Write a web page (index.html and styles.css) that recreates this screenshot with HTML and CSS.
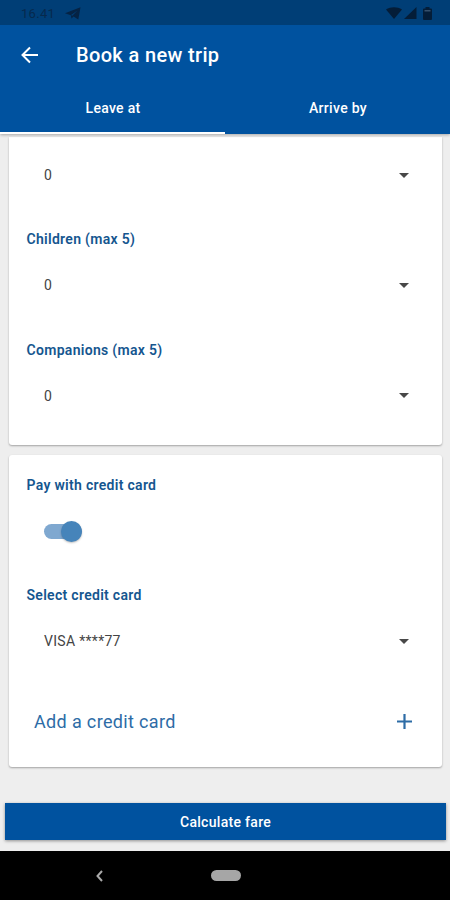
FILE: index.html
```
<!DOCTYPE html>
<html lang="en">
<head>
    <meta charset="UTF-8">
    <meta name="viewport" content="width=device-width, initial-scale=1.0">
    <title>Book a new trip</title>
    <link rel="stylesheet" href="styles.css">
</head>
<body>
    <header class="header">
        <div class="status-bar">
            <span class="clock">16.41</span>
            <svg class="telegram" width="16" height="13" viewBox="0 0 16 13"><path d="M0 6.2 15.5.3 13.3 12.4 8.6 9.4 6.5 11.6 5.8 8.2Z"/><path class="fold" d="M6 8 12.5 3.5 7.3 8.7"/></svg>
            <div class="status-icons">
                <svg width="16" height="12" viewBox="0 0 16 12"><path d="M0 2.5C4.5-.6 11.5-.6 16 2.5L8 12Z"/></svg>
                <svg width="13" height="12" viewBox="0 0 13 12"><path d="M0 12 12.5 0V12Z"/></svg>
                <svg class="battery" width="9" height="13" viewBox="0 0 9 13"><path d="M2.5 0h4v1.5H8q1 0 1 1V12q0 1-1 1H1q-1 0-1-1V2.5q0-1 1-1h1.5Z"/><path class="level" d="M1.5 3h6v1.5h-6Z"/></svg>
            </div>
        </div>
        <div class="app-bar">
            <svg class="back" width="18" height="18" viewBox="0 0 18 18"><path d="M17 9H2M9 1.5 1.5 9 9 16.5"/></svg>
            <h1>Book a new trip</h1>
        </div>
        <nav class="tabs">
            <div class="tab active">Leave at</div>
            <div class="tab">Arrive by</div>
        </nav>
    </header>

    <main>
        <section class="card passengers">
            <div class="select"><span>0</span><i class="caret"></i></div>
            <h2>Children (max 5)</h2>
            <div class="select"><span>0</span><i class="caret"></i></div>
            <h2>Companions (max 5)</h2>
            <div class="select"><span>0</span><i class="caret"></i></div>
        </section>

        <section class="card payment">
            <h2>Pay with credit card</h2>
            <div class="switch-row"><div class="switch"><div class="thumb"></div></div></div>
            <h2>Select credit card</h2>
            <div class="select"><span>VISA ****77</span><i class="caret"></i></div>
            <div class="add-card">
                <span>Add a credit card</span>
                <svg width="15" height="15" viewBox="0 0 15 15"><path d="M7.5 0V15M0 7.5H15"/></svg>
            </div>
        </section>

        <button class="calculate">Calculate fare</button>
    </main>

    <footer class="nav-bar">
        <svg class="nav-back" width="7" height="12" viewBox="0 0 7 12"><path d="M6 1 1.5 6 6 11"/></svg>
        <div class="home"></div>
    </footer>
</body>
</html>
```
FILE: styles.css
```
* { box-sizing: border-box; }
body {
    margin: 0;
    height: 900px;
    display: flex;
    flex-direction: column;
    background: #eee;
    font-family: Roboto, sans-serif;
    overflow: hidden;
}
h1, h2 { margin: 0; }
svg { display: block; }

/* header */
.header {
    position: relative;
    height: 134px;
    background: #00529f;
    color: #fff;
    box-shadow: 0 1px 3px rgba(0, 0, 0, 0.3);
}
.status-bar {
    height: 25px;
    padding: 1px 18px 0 21px;
    display: flex;
    align-items: center;
    background: #003e76;
    color: #06294d;
    fill: #052344;
}
.clock {
    width: 44px;
    font-size: 13px;
    letter-spacing: 0.3px;
}
.fold { fill: #003e76; }
.status-icons {
    margin-left: auto;
    display: flex;
    align-items: center;
    gap: 2px;
    fill: #041d38;
}
.battery { margin-left: 4px; }
.level { fill: #35506c; }
.app-bar {
    height: 60px;
    padding-left: 21px;
    display: flex;
    align-items: center;
}
.back {
    margin-right: 37px;
    fill: none;
    stroke: #fff;
    stroke-width: 2;
}
h1 {
    font-size: 20px;
    font-weight: 500;
    letter-spacing: 0.35px;
}
.tabs {
    height: 49px;
    display: flex;
}
.tab {
    flex: 1;
    padding: 0 0 1px 1px;
    display: flex;
    align-items: center;
    justify-content: center;
    font-size: 14px;
    font-weight: 500;
    letter-spacing: 0.3px;
    border-bottom: 2px solid transparent;
}
.tab.active { border-color: #fff; }

/* cards */
main {
    height: 717px;
    display: flex;
    flex-direction: column;
}
.card {
    margin: 0 8px 0 9px;
    background: #fff;
    border-radius: 3px;
    box-shadow: 0 1px 2px rgba(0, 0, 0, 0.32);
}
.passengers {
    height: 308px;
    margin-top: 3px;
    padding-top: 15px;
    border-radius: 0 0 3px 3px;
}
.payment {
    height: 312px;
    margin-top: 10px;
    padding-top: 17px;
}
h2 {
    height: 26px;
    margin-bottom: 10px;
    padding-left: 17.5px;
    line-height: 27px;
    font-size: 14px;
    font-weight: 600;
    letter-spacing: 0.3px;
    color: #15568f;
}
.select {
    height: 46px;
    margin-bottom: 28.3px;
    padding: 0 33px 0 35px;
    display: flex;
    align-items: center;
    justify-content: space-between;
    font-size: 14px;
    letter-spacing: 0.3px;
    color: #444;
}
.caret {
    border: 5px solid transparent;
    border-top-color: #484848;
    border-bottom: 0;
}
.switch-row {
    height: 46px;
    margin-bottom: 28px;
    padding-left: 35px;
    display: flex;
    align-items: center;
}
.switch {
    width: 38px;
    height: 15px;
    display: flex;
    align-items: center;
    justify-content: flex-end;
    border-radius: 8px;
    background: #7fa8d0;
}
.thumb {
    width: 21px;
    height: 21px;
    flex: none;
    border-radius: 50%;
    background: #4684ba;
    box-shadow: 0 1px 2px rgba(0, 0, 0, 0.25);
}
.add-card {
    height: 58.4px;
    padding: 0 30px 0 25px;
    display: flex;
    align-items: center;
    justify-content: space-between;
    font-size: 18px;
    letter-spacing: 0.35px;
    color: #2d6ca6;
}
.add-card svg {
    stroke: #2d6ca6;
    stroke-width: 2.2;
}

.calculate {
    height: 37px;
    margin: 36px 4px 0 5px;
    padding: 0;
    border: 0;
    background: #00529f;
    color: #fff;
    font: 500 14px Roboto, sans-serif;
    letter-spacing: 0.3px;
    box-shadow: 0 1px 3px rgba(0, 0, 0, 0.4);
}

/* system buttons */
.nav-bar {
    height: 49px;
    padding-left: 96px;
    display: flex;
    align-items: center;
    background: #000;
}
.nav-back {
    margin-right: 108px;
    fill: none;
    stroke: #aaa;
    stroke-width: 2;
}
.home {
    width: 30px;
    height: 11px;
    border-radius: 6px;
    background: #a6a6a6;
}
```
